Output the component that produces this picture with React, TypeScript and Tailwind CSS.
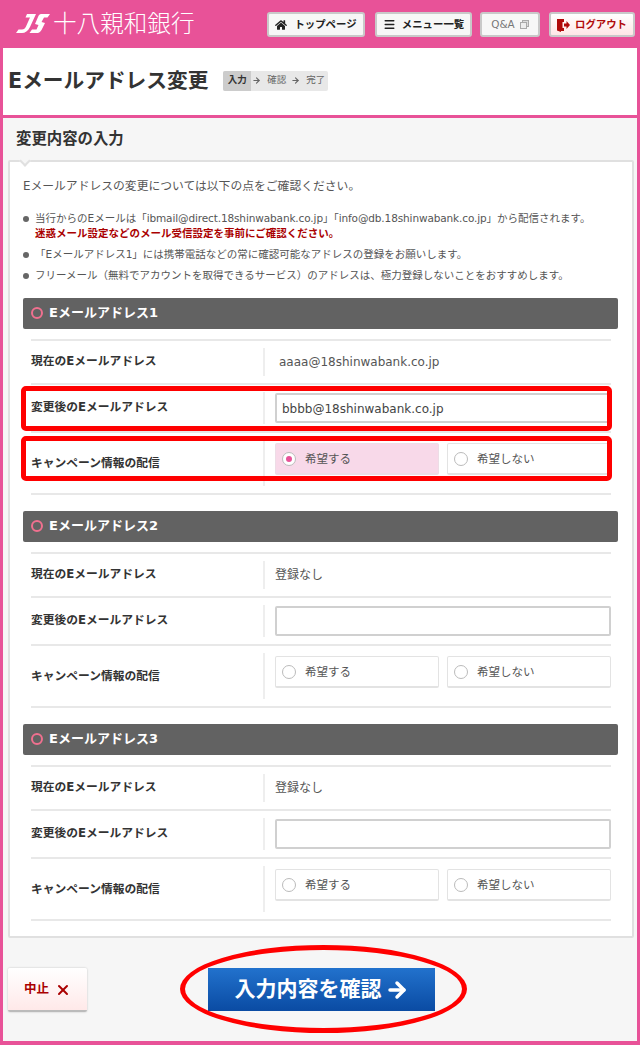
import type { ReactNode } from "react";
import { ArrowRight, Menu, X } from "lucide-react";
import { FaHome } from "react-icons/fa";

const Logo = () => (
  <svg width="34" height="20" viewBox="0 0 34 20" fill="white">
    <path d="M11 0h9l-6 13c-2 4-5 6-8 6H0l2.500-3.500h3.500c2 0 3-1 4-3L14 3.500h-4.500z" />
    <path d="M25 0h9l-2.500 3.500H28L25.500 8l3.500 1-3.500 7c-1.500 2.500-3 3-5 3h-7l2.500-3.500h4.500L22.500 11 19 10l3-7c.6-2 2-3 3-3z" />
  </svg>
);

const TopButton = ({ children, className }: { children: ReactNode; className: string }) => (
  <a className={`flex h-[25px] items-center justify-center rounded-[3px] border-2 border-[#c9c9c9] pt-[1px] text-[10.400px] font-bold ${className}`}>
    {children}
  </a>
);

const Header = () => (
  <header className="flex h-[48px] items-center pl-[13px] pr-[2px]">
    <Logo />
    <span className="ml-[3px] pt-[2px] text-[23.600px] font-light leading-none text-white">十八親和銀行</span>
    <nav className="ml-auto flex gap-[9px]">
      <TopButton className="w-[98px] gap-[7px] bg-[#f7f7f7] text-[#222]">
        <FaHome size={12} />
        トップページ
      </TopButton>
      <TopButton className="ml-[1px] w-[97px] gap-[6px] bg-[#f7f7f7] text-[#222]">
        <Menu size={13} strokeWidth={2.500} />
        メニュー一覧
      </TopButton>
      <TopButton className="-ml-[1px] w-[60px] gap-[5px] bg-[#f7f7f7] font-normal text-[#777]">
        Q&amp;A
        <svg width="9" height="9" viewBox="0 0 9 9" fill="#ddd" stroke="#aaa" strokeWidth="1">
          <rect x="2.500" y="0.500" width="6" height="6" />
          <rect x="0.500" y="2.500" width="6" height="6" fill="#eee" />
        </svg>
      </TopButton>
      <TopButton className="w-[86px] gap-[5px] bg-gradient-to-b from-white to-[#ffe6e6] text-[#b00a0a]">
        <svg width="13" height="14" viewBox="0 0 13 14" fill="#b00a0a">
          <path d="M0 1h7v3H5.500v6H7v3H4v1L0 12.500z" />
          <path d="M7 5.500h2.500V3L13 7l-3.500 4V8.500H7z" />
        </svg>
        ログアウト
      </TopButton>
    </nav>
  </header>
);

const TitleBar = () => (
  <div className="flex h-[67px] items-center bg-white pb-[2px] pl-[5px]">
    <h1 className="pt-[2px] text-[20.700px] font-bold text-[#333]">Eメールアドレス変更</h1>
    <ol className="ml-[15px] flex h-[20px] items-center overflow-hidden rounded-[2px] bg-[#e8e8e8] text-[9.500px] text-[#666]">
      <li className="flex h-full w-[28px] items-center justify-center bg-[#cccccc] font-bold text-[#333]">入力</li>
      <li className="ml-[1px]"><ArrowRight size={9} strokeWidth={3} /></li>
      <li className="ml-[6px]">確認</li>
      <li className="ml-[5px]"><ArrowRight size={9} strokeWidth={3} /></li>
      <li className="ml-[6px] mr-[3px]">完了</li>
    </ol>
  </div>
);

const Radio = ({ checked, label }: { checked?: boolean; label: string }) => (
  <div
    className={`flex h-[32px] flex-1 items-center gap-[9px] rounded-[2px] border border-b-2 pl-[6px] text-[11.500px] text-[#555] ${
      checked ? "border-[#eddde6] bg-[#f8d9e9]" : "border-[#e3e3e3] bg-white"
    }`}
  >
    <span className="flex h-[14px] w-[14px] items-center justify-center rounded-full border border-[#bbb] bg-white">
      {checked && <span className="h-[6px] w-[6px] rounded-full bg-[#e85298]" />}
    </span>
    <span className="pt-[3px]">{label}</span>
  </div>
);

const Row = ({ label, children, height, top }: { label: string; children: ReactNode; height: string; top?: boolean }) => (
  <div className={`flex items-center border-b-2 border-[#e8e8e8] ${height}`}>
    <div className={`w-[232px] text-[11.750px] font-bold text-[#333] ${top ? "pt-[2px]" : ""}`}>{label}</div>
    <div className={`flex h-[calc(100%-14px)] flex-1 gap-[8px] border-l-2 border-[#eeeeee] pl-[10px] ${top ? "items-start pt-[3px]" : "items-center"}`}>
      {children}
    </div>
  </div>
);

const Section = ({ n, current, value }: { n: number; current: string; value?: string }) => (
  <section className="mb-[16px]">
    <div className="flex h-[31px] items-center gap-[6px] rounded-[2px] bg-[#626262] pb-[1px] pl-[8px] text-[13px] font-bold text-white">
      <span className="h-[12px] w-[12px] rounded-full border-2 border-[#f0708f]" />
      Eメールアドレス{n}
    </div>
    <div className="ml-[8px] mr-[7px] mt-[10px] border-t-2 border-[#e8e8e8]">
      <Row label="現在のEメールアドレス" height="h-[44px]">
        <span className={`text-[12px] text-[#555] ${value ? "pl-[4px]" : ""}`}>{current}</span>
      </Row>
      <Row label="変更後のEメールアドレス" height="h-[48px]">
        <input
          readOnly
          value={value ?? ""}
          className="h-[30px] w-full rounded-[2px] border-2 border-[#d0d0d0] bg-white px-[5px] pt-[1px] text-[12px] text-[#444] outline-none"
        />
      </Row>
      <Row label="キャンペーン情報の配信" height="h-[62px]" top>
        <Radio checked={!!value} label="希望する" />
        <Radio label="希望しない" />
      </Row>
    </div>
  </section>
);

const Notice = ({ children }: { children: ReactNode }) => (
  <li className="flex gap-[6px]">
    <span className="mt-[5px] h-[6px] w-[6px] shrink-0 rounded-full bg-[#666]" />
    <div>{children}</div>
  </li>
);

export default function App() {
  return (
    <div className="relative h-[1045px] w-[640px] overflow-hidden border-x-[3px] border-b-[4px] border-[#e85298] bg-[#e85298] font-['DejaVu_Sans','Noto_Sans_CJK_JP',sans-serif]">
      <Header />
      <TitleBar />
      <main className="mt-[3px] h-[923px] bg-[#f6f6f6] pl-[5px] pr-[3px]">
        <h2 className="flex h-[42px] items-center pt-[1px] pl-[8px] text-[15.400px] font-bold text-[#333]">変更内容の入力</h2>
        <div className="relative h-[778px] rounded-[2px] border-2 border-[#e0e0e0] bg-white pl-[13px] pr-[14px] pt-[15px]">
          <span className="absolute left-[11px] top-[-2px] h-[8px] w-[8px] -translate-y-[3px] rotate-45 border-b-2 border-r-2 border-[#e0e0e0] bg-[#f6f6f6]" />
          <p className="text-[11.800px] leading-[18px] text-[#555]">Eメールアドレスの変更については以下の点をご確認ください。</p>
          <ul className="mt-[16px] space-y-[6px] text-[10.500px] leading-[15px] text-[#555]">
            <Notice>
              当行からのEメールは「<span className="tracking-[-0.12px]">ibmail@direct.18shinwabank.co.jp</span>」「<span className="tracking-[-0.12px]">info@db.18shinwabank.co.jp</span>」から配信されます。
              <br />
              <strong className="text-[#aa0000]">迷惑メール設定などのメール受信設定を事前にご確認ください。</strong>
            </Notice>
            <Notice>「Eメールアドレス1」には携帯電話などの常に確認可能なアドレスの登録をお願いします。</Notice>
            <Notice>フリーメール（無料でアカウントを取得できるサービス）のアドレスは、極力登録しないことをおすすめします。</Notice>
          </ul>
          <div className="mt-[15px]">
            <Section n={1} current="aaaa@18shinwabank.co.jp" value="bbbb@18shinwabank.co.jp" />
            <Section n={2} current="登録なし" />
            <Section n={3} current="登録なし" />
          </div>
        </div>
        <div className="relative mt-[29px] flex h-[45px] items-center">
          <button className="flex h-[44px] w-[79px] items-center justify-center gap-[6px] rounded-[2px] border-b-2 border-[#bbb] bg-gradient-to-b from-white to-[#ffe9e9] pt-[2px] text-[12.500px] font-bold text-[#aa0000] shadow-[0_0_2px_#bbb]">
            中止
            <X size={16} strokeWidth={3} />
          </button>
          <button className="ml-[121px] flex h-[43px] w-[227px] items-center justify-center gap-[3px] bg-gradient-to-b from-[#2272cd] to-[#0a4ba3] text-[21px] font-bold text-white">
            入力内容を確認
            <ArrowRight size={24} strokeWidth={3.500} />
          </button>
        </div>
      </main>
      {/* red annotation marks laid over the form */}
      <div className="absolute left-[18px] top-[386px] h-[45px] w-[591px] rounded-[5px] border-[5px] border-[#ff0000]" />
      <div className="absolute left-[18px] top-[436px] h-[45px] w-[591px] rounded-[5px] border-[5px] border-[#ff0000]" />
      <div className="absolute left-[177px] top-[945px] h-[88px] w-[287px] rounded-[50%] border-[5px] border-[#ff0000]" />
    </div>
  );
}
